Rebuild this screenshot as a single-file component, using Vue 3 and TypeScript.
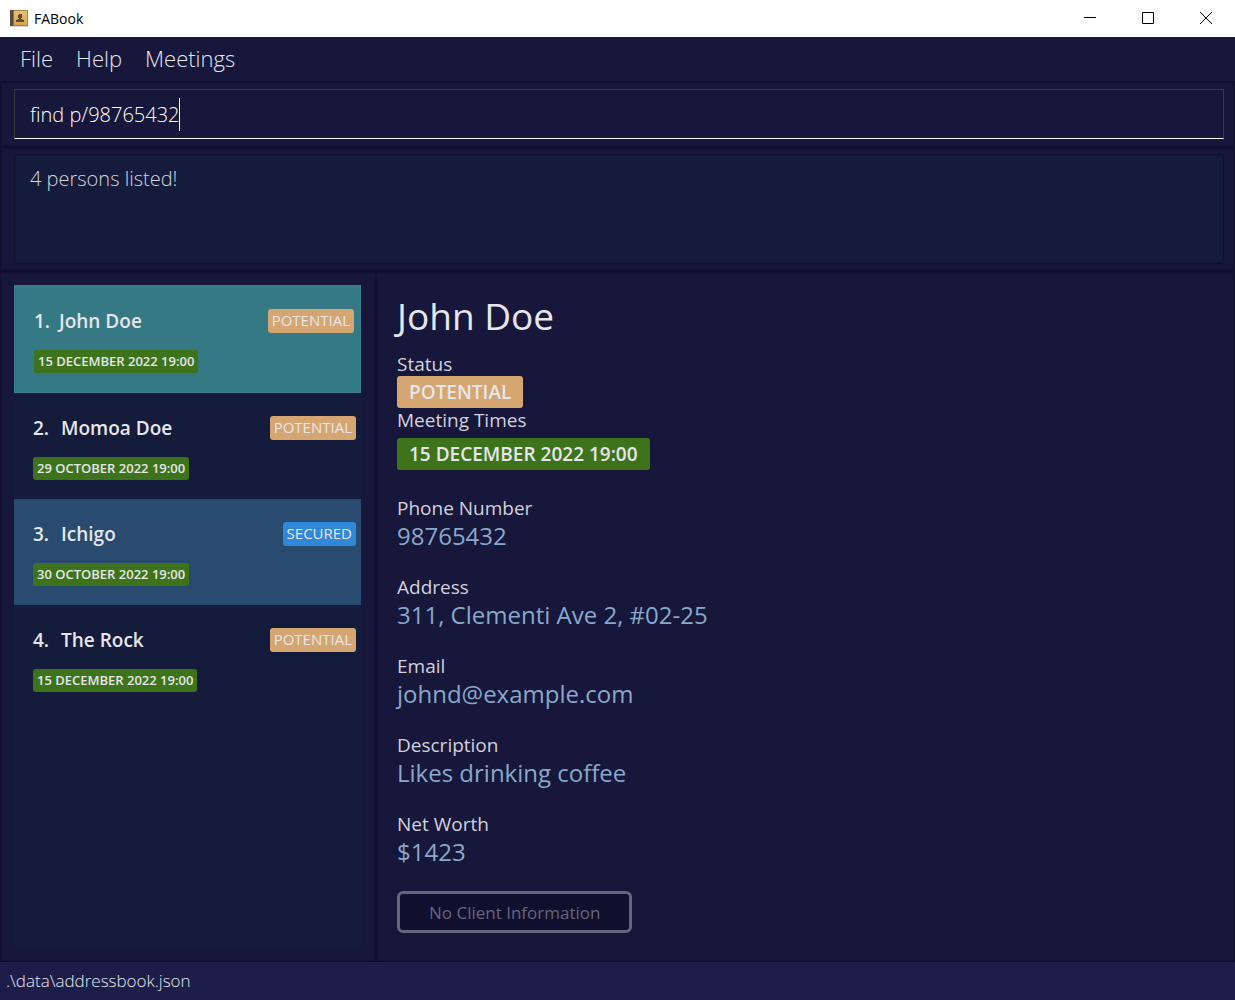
<script setup lang="ts">
import { ref } from 'vue'

type Status = 'POTENTIAL' | 'SECURED'

interface Person {
  name: string
  status: Status
  meeting: string
}

interface Detail {
  label: string
  value: string
}

const menus: string[] = ['File', 'Help', 'Meetings']
const command = ref('find p/98765432')
const selected = ref(0)

const persons: Person[] = [
  { name: 'John Doe', status: 'POTENTIAL', meeting: '15 DECEMBER 2022 19:00' },
  { name: 'Momoa Doe', status: 'POTENTIAL', meeting: '29 OCTOBER 2022 19:00' },
  { name: 'Ichigo', status: 'SECURED', meeting: '30 OCTOBER 2022 19:00' },
  { name: 'The Rock', status: 'POTENTIAL', meeting: '15 DECEMBER 2022 19:00' },
]

const details: Detail[] = [
  { label: 'Phone Number', value: '98765432' },
  { label: 'Address', value: '311, Clementi Ave 2, #02-25' },
  { label: 'Email', value: 'johnd@example.com' },
  { label: 'Description', value: 'Likes drinking coffee' },
  { label: 'Net Worth', value: '$1423' },
]
</script>

<template>
  <div class="window">
    <header class="titlebar">
      <svg class="app-icon" width="20" height="20" viewBox="0 0 20 20" aria-hidden="true">
        <defs>
          <linearGradient id="cover" x1="0" y1="0" x2="0" y2="1">
            <stop offset="0" stop-color="#e3c07f" />
            <stop offset="1" stop-color="#dca54a" />
          </linearGradient>
        </defs>
        <rect x="1" y="17" width="17" height="1" fill="#d8d4cc" />
        <rect x="1" y="1" width="17" height="16" fill="#a9823f" />
        <rect x="4" y="2" width="13" height="14" fill="url(#cover)" />
        <rect x="0" y="1" width="3" height="16" fill="#5a4a42" />
        <rect x="3" y="1" width="1" height="16" fill="#85704f" />
        <path d="M9 5h3v4h-1v1l3 1v2H6v-2l3-1V9H8V6h1z" fill="#5c4a2a" />
      </svg>
      <h1 class="app-title">FABook</h1>
      <div class="window-controls">
        <button type="button" aria-label="Minimize">
          <svg width="12" height="12" viewBox="0 0 12 12"><path d="M0 5.5h12" stroke="#000" /></svg>
        </button>
        <button type="button" aria-label="Maximize">
          <svg width="12" height="12" viewBox="0 0 12 12"><path d="M.5.5h11v11H.5z" fill="none" stroke="#000" /></svg>
        </button>
        <button type="button" aria-label="Close">
          <svg width="12" height="12" viewBox="0 0 12 12"><path d="M0 0l12 12M12 0L0 12" stroke="#000" /></svg>
        </button>
      </div>
    </header>

    <nav class="menubar">
      <button v-for="menu in menus" :key="menu" type="button">{{ menu }}</button>
    </nav>

    <section class="pane command">
      <div class="command-box">
        <input v-model="command" type="text" aria-label="Command" spellcheck="false" />
        <span class="caret-line" aria-hidden="true"><span class="typed">{{ command }}</span></span>
      </div>
    </section>

    <section class="pane result">
      <output class="result-box">4 persons listed!</output>
    </section>

    <main class="content">
      <section class="pane list-pane">
        <ul class="person-list">
          <li
            v-for="(person, i) in persons"
            :key="i"
            class="person"
            :class="{ odd: i % 2 === 0, selected: i === selected }"
            @click="selected = i"
          >
            <div class="person-head">
              <span class="index">{{ i + 1 }}.</span>
              <span class="name">{{ person.name }}</span>
              <span class="tag" :class="person.status.toLowerCase()">{{ person.status }}</span>
            </div>
            <span class="meeting">{{ person.meeting }}</span>
          </li>
        </ul>
      </section>

      <section class="pane detail-pane">
        <h2>John Doe</h2>
        <p class="label">Status</p>
        <span class="big-tag potential">POTENTIAL</span>
        <p class="label">Meeting Times</p>
        <span class="big-tag time">15 DECEMBER 2022 19:00</span>
        <dl>
          <div v-for="detail in details" :key="detail.label" class="detail">
            <dt class="label">{{ detail.label }}</dt>
            <dd>{{ detail.value }}</dd>
          </div>
        </dl>
        <button type="button" class="client" disabled>No Client Information</button>
      </section>
    </main>

    <footer class="statusbar">.\data\addressbook.json</footer>
  </div>
</template>

<style>
body {
  margin: 0;
  background: #17163b;
}
</style>

<style scoped>
* {
  box-sizing: border-box;
}

.window {
  display: flex;
  flex-direction: column;
  min-height: 100vh;
  background: #17163b;
  color: #e6e6ec;
  font-family: 'Open Sans', 'Noto Sans', sans-serif;
}

button {
  font-family: inherit;
}

h1,
h2,
p,
dl,
dd,
ul {
  margin: 0;
  padding: 0;
}

.titlebar {
  display: flex;
  align-items: center;
  height: 37px;
  padding-left: 10px;
  background: #fff;
  color: #000;
}

.app-title {
  margin-left: 4px;
  font-size: 14px;
  font-weight: 400;
}

.window-controls {
  display: flex;
  align-self: stretch;
  margin-left: auto;
}

.window-controls button {
  display: flex;
  align-items: center;
  justify-content: center;
  width: 58px;
  padding: 0 0 1px;
  border: 0;
  background: none;
}

.menubar {
  display: flex;
  gap: 23px;
  height: 44px;
  padding: 0 20px 2px;
}

.menubar button {
  padding: 0;
  border: 0;
  background: none;
  color: #e6e6ec;
  font-size: 22px;
  font-weight: 300;
}

.pane {
  border: 1px solid #110f2e;
  box-shadow: inset 0 0 0 1px #141235;
}

.command {
  padding: 7px 10px 7px 13px;
}

.command-box {
  position: relative;
  height: 50px;
  border: 1px solid #3b3b3b;
  border-bottom-color: #fff;
}

.command-box input {
  display: block;
  width: 100%;
  height: 100%;
  padding: 0 15px;
  border: 0;
  outline: 0;
  background: none;
  caret-color: transparent;
  color: #fff;
  font-family: inherit;
  font-size: 20px;
  font-weight: 300;
}

.caret-line {
  position: absolute;
  top: 8px;
  left: 15px;
  pointer-events: none;
}

.typed {
  display: block;
  height: 33px;
  border-right: 1px solid #fff;
  color: transparent;
  font-size: 20px;
  font-weight: 300;
}

.result {
  padding: 6px 10px 6px 13px;
}

.result-box {
  display: block;
  height: 110px;
  padding: 9px 15px;
  border: 1px solid #110f2e;
  background: #151c3b;
  box-shadow: inset 0 0 0 1px #131635;
  color: #d6d6dc;
  font-size: 20px;
  font-weight: 300;
  line-height: 30px;
}

.content {
  display: grid;
  flex: 1;
  grid-template-columns: minmax(376px, 30%) 1fr;
}

.list-pane {
  display: flex;
  padding: 13px 14px 14px 13px;
}

.person-list {
  flex: 1;
  background: #151c3b;
  list-style: none;
}

.person {
  height: 106px;
  padding: 22px 5px 0 19px;
}

.person.odd {
  background: #284b6f;
}

.person.selected {
  height: 108px;
  padding-right: 6px;
  border: 1px solid #3a7f8d;
  background: #357985;
}

.person-head {
  display: flex;
  align-items: center;
  height: 26px;
  margin-bottom: 15px;
  font-size: 19px;
  font-weight: 600;
}

.index {
  width: 28px;
}

.selected .index {
  width: 25px;
}

.tag {
  margin-left: auto;
  padding: 0 4px 1px;
  border-radius: 3px;
  font-size: 15px;
  font-weight: 400;
  line-height: 23px;
}

.potential {
  background: #d5a671;
}

.secured {
  background: #3187d8;
}

.meeting {
  display: inline-block;
  padding: 0 4px;
  border-radius: 3px;
  background: #3d741b;
  font-size: 13px;
  font-weight: 600;
  line-height: 23px;
}

.detail-pane {
  display: flex;
  flex-direction: column;
  align-items: flex-start;
  padding: 18px 20px 16px;
}

h2 {
  margin-bottom: 10px;
  font-size: 37px;
  font-weight: 400;
  line-height: 52px;
}

.label {
  color: #d3d2da;
  font-size: 19px;
  line-height: 24px;
}

.big-tag {
  padding: 0 12px;
  border-radius: 3px;
  font-size: 19px;
  font-weight: 600;
  line-height: 32px;
}

.time {
  margin-top: 6px;
  background: #3d741b;
}

dl {
  margin-top: 26px;
}

.detail {
  height: 79px;
}

dd {
  color: #88a9c9;
  font-size: 24px;
  line-height: 32px;
}

.client {
  height: 42px;
  padding: 0 29px;
  border: 3px solid #66657c;
  border-radius: 6px;
  background: #110f2e;
  color: #66657c;
  font-size: 17px;
}

.statusbar {
  height: 38px;
  padding-left: 6px;
  background: #1d1d4a;
  font-size: 17px;
  font-weight: 300;
  line-height: 38px;
}
</style>
